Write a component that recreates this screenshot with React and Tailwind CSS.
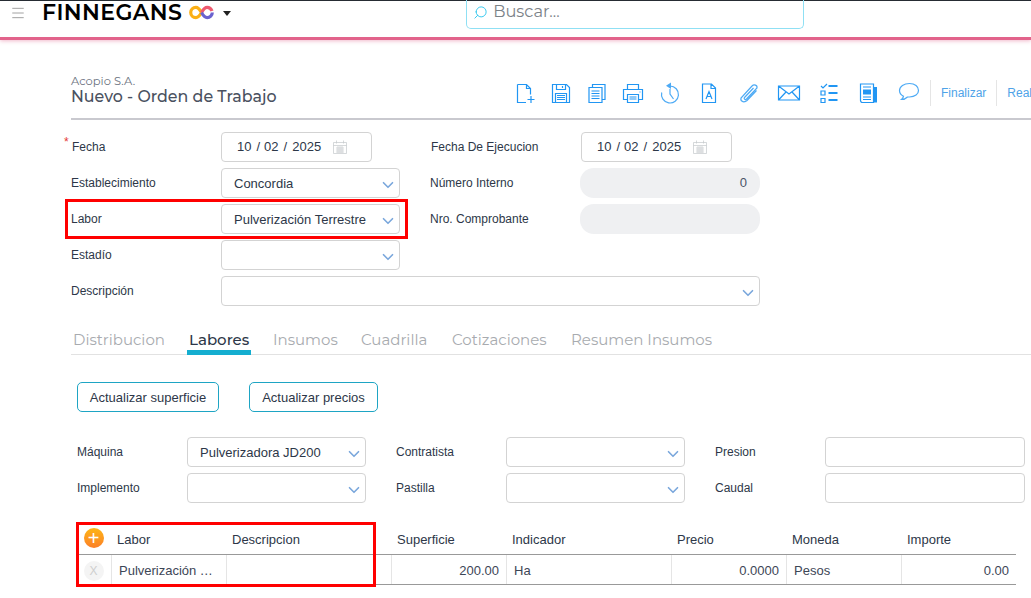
import React from "react"
import { ChevronDown, Menu, Search } from "lucide-react"

const heading = "font-['Montserrat','Open_Sans',sans-serif]"

const Ic = ({ children, className = "" }) => (
  <svg viewBox="0 0 24 24" width="24" height="24" fill="none" stroke="#2196f3" strokeWidth="1.2" className={className}>
    {children}
  </svg>
)

const icons = [
  <Ic>
    <path d="M4.5 3.500h9l4 4v6M13.500 3.500v4h4M13 21.500H4.500v-18M18 15v7M14.500 18.500h7" />
  </Ic>,
  <Ic>
    <path d="M3.500 3.500h14l3 3v15h-17zM7.500 3.500v5h9v-5M13.500 5v2M6.500 21.500v-9h11v9M8 14.500h8M8 16.500h8M8 18.500h8" />
  </Ic>,
  <Ic>
    <path d="M7.500 6V3.500h12.500v15H17M4 6.500h13v15H4zM6.500 10h8M6.500 12.500h8M6.500 15h8M6.500 17.500h8" />
  </Ic>,
  <Ic>
    <path d="M6.500 8.500v-5h11v5M6 18.500H2.500v-10h19v10H18M6.500 13.500h11v8h-11zM8.500 16h7M8.500 18h7M18.500 11h1" />
  </Ic>,
  <Ic className="opacity-80">
    <path d="M12 5a8.500 8.500 0 1 1-8.300 6.500M12 8v5l3.500 5" />
    <path d="M13 1.500v6.500l-5-3.300z" fill="#2196f3" stroke="none" />
  </Ic>,
  <Ic>
    <path d="M5.500 3h9l4 4v14.500h-13zM14 3v4.500h4.500M9 18l3-7.500 3 7.500M10 15.500h4" />
  </Ic>,
  <Ic className="opacity-80">
    <path d="M19.500 9.500 10 19.500c-2 2-7 2-6-2.500l11-12c2-2 5.500-1 5 2L9.500 18c-1.500 1.500-3-.5-2-1.500l9-9.500" />
  </Ic>,
  <Ic>
    <path d="M1.500 5h21v14h-21zM1.500 5l10.500 8 10.500-8M1.500 19l7.500-8M22.500 19 15 11" />
  </Ic>,
  <Ic>
    <path d="M4 5l2 2 4-4" />
    <path d="M4 10h4v4H4zM4 17.500h4v4H4z" />
    <path d="M11.500 5h9M11.500 12h9M11.500 19h9" strokeWidth="2.200" />
  </Ic>,
  <Ic>
    <path d="M3.500 3h13v18.500h-11c-1 0-2-.8-2-2z" />
    <path d="M6 6h8M6 16h8M6 18.500h8" />
    <path d="M6 8.500h8v5H6z" fill="#2196f3" stroke="none" />
    <path d="M17 6h3v15.500h-3z" fill="#2196f3" stroke="none" />
  </Ic>,
  <Ic className="opacity-80">
    <path d="M12.500 2.500c-5.500 0-10 2.800-10 7 0 2.500 1.500 4.500 4 5.700-.2 1.500-1 2.500-2 3.300 2.500 0 4.500-1 6-2.500h2c5.500 0 9-3 9-6.500 0-4.200-3.500-7-9-7z" />
  </Ic>,
]

const iconWidths = ["w-[36px]", "w-[36px]", "w-[36px]", "w-[36px]", "w-[38px]", "w-[40px]", "w-[40px]", "w-[40px]", "w-[40px]", "w-[40px]", "w-[40px]"]

const Select = ({ value, w = "w-[179px]" }) => (
  <div className={`${w} h-[30px] flex items-center justify-between border border-[#d3d3d3] rounded-[4px] pl-3 pr-[2px] text-[13px] text-[#2d3748]`}>
    <span className="pt-px">{value}</span>
    <ChevronDown size={18} color="#7aa7dc" strokeWidth={2.2} className="mt-[3px]" />
  </div>
)

const DateInput = () => (
  <div className="w-[151px] h-[30px] flex items-center border border-[#d3d3d3] rounded-[4px] pl-[15px] text-[13px] text-[#2d3748]">
    <span>10</span>
    <span className="ml-[5px]">/</span>
    <span className="ml-[4px]">02</span>
    <span className="ml-[5px]">/</span>
    <span className="ml-[5px]">2025</span>
    <svg viewBox="0 0 14 14" width="14" height="14" fill="none" stroke="#c4c8cc" className="ml-[12px] mb-px">
      <path d="M.5 2.500h13v11H.5zM3.500.5v3M10.500.5v3M.5 5.500h13M3 8h8M3 10h8M3 12h8M5 6v7M7 6v7M9 6v7" strokeWidth=".7" />
    </svg>
  </div>
)

const Pill = ({ value }) => (
  <div className="w-[180px] h-[30px] flex items-center justify-end rounded-[14px] bg-[#eff0f2] pr-[13px] text-[13px] text-[#4a5568]">{value}</div>
)

const Label = ({ children, className = "w-[150px]" }) => (
  <div className={`${className} text-xs text-[#2d3748] shrink-0`}>{children}</div>
)

const cols = "grid grid-cols-[33px_115px_165px_115px_165px_115px_115px_115px] w-[938px]"
const headers = ["Labor", "Descripcion", "Superficie", "Indicador", "Precio", "Moneda", "Importe"]

const Cell = ({ children, right }) => (
  <div className={`h-[29px] flex items-center border-l border-[#e5e5e5] px-[7px] pt-[2px] text-[13px] text-[#3d4656] ${right ? "justify-end" : ""}`}>{children}</div>
)

export default function App() {
  return (
    <div className="relative w-[1031px] h-[598px] overflow-hidden bg-white font-['Liberation_Sans',sans-serif]">
      <header className="flex items-start h-[40px] border-t border-[#262c33] border-b-[3px] border-b-[#e2638b] shadow-[0_1px_4px_rgba(226,99,139,0.45)]">
        <Menu size={16} color="#8a8a8a" strokeWidth={1.2} className="ml-[10px] mt-[4px]" />
        <div className={`${heading} ml-[16px] text-[22px] leading-[24px] font-semibold text-black tracking-[0.4px]`}>FINNEGANS</div>
        <svg viewBox="0 0 28 16" width="27" height="15" className="ml-[6px] mt-[4px]" fill="none" strokeWidth="3.400">
          <path d="M14 8c-2-3.500-3.500-5.500-6-5.500a5.500 5.500 0 0 0 0 11c2.500 0 4-2 6-5.500" stroke="#fbb016" />
          <path d="M14 8c2-3.500 3.500-5.500 6-5.500 2.500 0 4.500 2 5.200 4" stroke="#ee5a6f" />
          <path d="M14 8c2 3.500 3.500 5.500 6 5.500a5.500 5.500 0 0 0 5.500-5.500" stroke="#6a62cf" />
        </svg>
        <div className="ml-[8px] mt-[10px] w-0 h-0 border-x-[4px] border-x-transparent border-t-[5px] border-t-[#222]" />
        <div className="ml-[235px] w-[338px] h-[29px] flex items-start border-x border-b border-[#8fe0f4] rounded-b-[5px] pl-[6px] -mt-px">
          <Search size={15} color="#2fc6ee" strokeWidth={1.5} className="-scale-x-100 mt-[5px]" />
          <span className={`${heading} ml-[5px] text-[16.250px] leading-[22px] text-[#7b8288]`}>Buscar...</span>
        </div>
      </header>

      <main className="pl-[71px] pt-[34px]">
        <div className="flex h-[46px] border-b-2 border-[#c9c9cf]">
          <div className="w-[436px] shrink-0 pt-px">
            <div className={`${heading} text-[11.5px] leading-[13px] text-[#6b7280]`}>Acopio S.A.</div>
            <div className={`${heading} text-[15.850px] leading-[17px] font-medium text-[#4a5160]`}>Nuevo - Orden de Trabajo</div>
          </div>
          <div className="flex items-center h-[38px]">
            {icons.map((icon, i) => (
              <div key={i} className={`${iconWidths[i]} flex justify-center shrink-0`}>{icon}</div>
            ))}
            <div className="ml-px h-[26px] border-l border-[#e5e5e5] pl-[10px] flex items-center text-xs text-[#4ea3e8] whitespace-nowrap">Finalizar</div>
            <div className="ml-[10px] h-[26px] border-l border-[#e5e5e5] pl-[10px] flex items-center text-xs text-[#4ea3e8] whitespace-nowrap">Realizar</div>
          </div>
        </div>

        <div className="flex flex-col gap-1.5 mt-[12px] w-[689px]">
          <div className="flex items-center">
            <Label>
              <span className="relative pl-px">
                <span className="absolute -left-[7px] -top-[6px] text-[#e53935]">*</span>
                Fecha
              </span>
            </Label>
            <DateInput />
            <Label className="ml-[59px] w-[150px]">Fecha De Ejecucion</Label>
            <DateInput />
          </div>
          <div className="flex items-center">
            <Label>Establecimiento</Label>
            <Select value="Concordia" />
            <Label className="ml-[30px] w-[150px]">Número Interno</Label>
            <Pill value="0" />
          </div>
          <div className="flex items-center">
            <Label>Labor</Label>
            <Select value="Pulverización Terrestre" />
            <Label className="ml-[30px] w-[150px]">Nro. Comprobante</Label>
            <Pill />
          </div>
          <div className="flex items-center">
            <Label>Estadío</Label>
            <Select />
          </div>
          <div className="flex items-center">
            <Label>Descripción</Label>
            <Select w="w-[539px]" />
          </div>
        </div>

        <nav className={`${heading} flex mt-[22px] h-[27px] border-b border-[#e2e2e2] text-[15px] text-[#a8abaf] leading-[24px]`}>
          <span className="ml-[2px] w-[115px]">Distribucion</span>
          <span className="w-[85px]">
            <span className="inline-block h-[27px] -ml-[1px] px-[2px] border-b-[5px] border-[#14aed0] font-medium text-[#2d3748]">Labores</span>
          </span>
          <span className="w-[88px]">Insumos</span>
          <span className="w-[91px]">Cuadrilla</span>
          <span className="w-[119px]">Cotizaciones</span>
          <span>Resumen Insumos</span>
        </nav>

        <div className="pl-[6px]">
          <div className="flex gap-[30px] mt-[27px]">
            <button className="w-[142px] h-[30px] pt-px border border-[#1ea5c4] rounded-[5px] text-[13px] text-[#2d3748]">Actualizar superficie</button>
            <button className="w-[129px] h-[30px] pt-px border border-[#1ea5c4] rounded-[5px] text-[13px] text-[#2d3748]">Actualizar precios</button>
          </div>

          <div className="grid grid-cols-[110px_179px_30px_110px_179px_30px_110px_200px] gap-y-1.5 items-center mt-[25px]">
            <Label className="">Máquina</Label>
            <Select value="Pulverizadora JD200" />
            <div />
            <Label className="">Contratista</Label>
            <Select />
            <div />
            <Label className="">Presion</Label>
            <div className="h-[30px] border border-[#d3d3d3] rounded-[4px]" />
            <Label className="">Implemento</Label>
            <Select />
            <div />
            <Label className="">Pastilla</Label>
            <Select />
            <div />
            <Label className="">Caudal</Label>
            <div className="h-[30px] border border-[#d3d3d3] rounded-[4px]" />
          </div>

          <div className="mt-[22px] ml-px">
            <div className={`${cols} h-[30px] items-center border-b border-[#999] text-[13px] text-[#2d3748]`}>
              <div className="flex justify-center pr-[2px] pb-[3px]">
                <div className="w-[20px] h-[20px] rounded-full bg-gradient-to-b from-[#fdb515] to-[#fb7f26] flex items-center justify-center text-white text-[20px] leading-none">+</div>
              </div>
              {headers.map((h) => (
                <div key={h} className="px-[6px]">{h}</div>
              ))}
            </div>
            <div className={`${cols} border-b border-[#999]`}>
              <div className="h-[29px] flex items-center justify-center pr-[2px] pt-[2px]">
                <div className="w-[20px] h-[20px] rounded-full bg-[#f4f4f4] flex items-center justify-center text-[#cfcfcf] text-xs">X</div>
              </div>
              <Cell><span className="truncate">Pulverización Terrestre</span></Cell>
              <Cell />
              <Cell right>200.00</Cell>
              <Cell>Ha</Cell>
              <Cell right>0.0000</Cell>
              <Cell>Pesos</Cell>
              <Cell right>0.00</Cell>
            </div>
          </div>
        </div>
      </main>

      <div className="absolute left-[65px] top-[199px] w-[343px] h-[40px] border-[3px] border-[#f00]" />
      <div className="absolute left-[76px] top-[522px] w-[300px] h-[65px] border-[3px] border-[#f00]" />
    </div>
  )
}
